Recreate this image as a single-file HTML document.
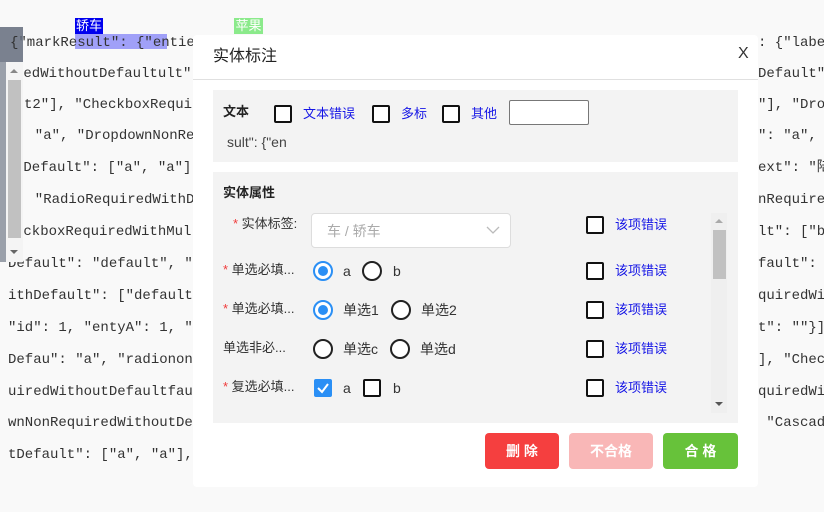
<!DOCTYPE html>
<html><head><meta charset="utf-8"><style>
*{margin:0;padding:0;box-sizing:border-box}
body{width:824px;height:512px;overflow:hidden;background:#f9f9f9;position:relative;font-family:"Liberation Sans","Noto Sans CJK SC",sans-serif}
.bg{position:absolute;font-family:"Liberation Mono",monospace;font-size:14px;color:#333;white-space:pre;line-height:16px}
.abs{position:absolute}
.cb{position:absolute;width:18px;height:18px;border:2px solid #111;border-radius:2px;background:#fff}
.rd{position:absolute;width:20px;height:20px;border:2px solid #222;border-radius:50%;background:#fff}
.rd.on{border-color:#2a8ff5}
.rd.on::after{content:"";position:absolute;left:3px;top:3px;width:10px;height:10px;border-radius:50%;background:#2a8ff5}
.t{position:absolute;font-size:14px;color:#333;white-space:nowrap;line-height:16px}
.lnk{position:absolute;font-size:13px;color:#1515e6;white-space:nowrap;line-height:16px}
.req{color:#f03a3a}
.btn{position:absolute;top:433px;height:36px;border-radius:4px;color:#fff;font-size:14px;font-weight:bold;text-align:center;line-height:36px}
</style></head><body>
<div class="abs" style="left:75px;top:18px;width:28px;height:16px;background:#0000ee;color:#fff;font-size:13px;line-height:16px;text-align:center">轿车</div>
<div class="abs" style="left:234px;top:18px;width:29px;height:16px;background:#8bea8b;color:#fff;font-size:13px;line-height:16px;text-align:center">苹果</div>
<div class="abs" style="left:75px;top:34px;width:92px;height:15px;background:#a0a0f8"></div>
<div class="bg" style="left:10px;top:35px">{"markResult": {"entie</div>
<div class="bg" style="left:15px;top:66px">redWithoutDefaultult"</div>
<div class="bg" style="left:24px;top:97px">t2"], "CheckboxRequi</div>
<div class="bg" style="left:18px;top:128px">  "a", "DropdownNonRe</div>
<div class="bg" style="left:15px;top:160px">.Default": ["a", "a"]</div>
<div class="bg" style="left:18px;top:192px">  "RadioRequiredWithD</div>
<div class="bg" style="left:15px;top:224px">eckboxRequiredWithMul</div>
<div class="bg" style="left:8px;top:256px">Default": "default", "</div>
<div class="bg" style="left:8px;top:288px">ithDefault": ["default</div>
<div class="bg" style="left:8px;top:320px">"id": 1, "entyA": 1, "</div>
<div class="bg" style="left:8px;top:352px">Defau": "a", "radionon</div>
<div class="bg" style="left:8px;top:384px">uiredWithoutDefaultfau</div>
<div class="bg" style="left:8px;top:415px">wnNonRequiredWithoutDe</div>
<div class="bg" style="left:8px;top:447px">tDefault": ["a", "a"],</div>
<div class="bg" style="left:758px;top:35px">: {"labe</div>
<div class="bg" style="left:758px;top:66px">Default"</div>
<div class="bg" style="left:758px;top:97px">"], "Drop</div>
<div class="bg" style="left:758px;top:128px">": "a",</div>
<div class="bg" style="left:758px;top:160px">ext": "陆</div>
<div class="bg" style="left:758px;top:192px">nRequired</div>
<div class="bg" style="left:758px;top:224px">lt": ["b</div>
<div class="bg" style="left:758px;top:256px">fault":</div>
<div class="bg" style="left:758px;top:288px">quiredWit</div>
<div class="bg" style="left:758px;top:320px">t": ""}]</div>
<div class="bg" style="left:758px;top:352px">], "Check</div>
<div class="bg" style="left:758px;top:384px">quiredWit</div>
<div class="bg" style="left:758px;top:415px"> "Cascad</div>
<div class="abs" style="left:0;top:27px;width:23px;height:35px;background:rgba(100,108,125,.85)"></div>
<div class="abs" style="left:0;top:62px;width:6px;height:200px;background:#9aa0aa"></div>
<div class="abs" style="left:6px;top:62px;width:17px;height:200px;background:#f4f4f4"></div>
<div class="abs" style="left:8px;top:80px;width:13px;height:158px;background:#c1c1c1"></div>
<div class="abs" style="left:10px;top:69px;width:0;height:0;border:4px solid transparent;border-bottom-color:#888;border-top:0"></div>
<div class="abs" style="left:10px;top:250px;width:0;height:0;border:4px solid transparent;border-top-color:#666;border-bottom:0"></div>
<div class="bg" style="left:10px;top:35px;color:#333">{</div>
<div class="abs" style="left:193px;top:35px;width:565px;height:452px;background:#fff;border-radius:4px"></div>
<div class="t" style="left:213px;top:48px;font-size:16px;line-height:18px;color:#222">实体标注</div>
<div class="t" style="left:738px;top:46px;font-size:16px;font-family:'Liberation Sans',sans-serif">X</div>
<div class="abs" style="left:193px;top:79px;width:565px;height:1px;background:#e0e0e0"></div>
<div class="abs" style="left:213px;top:90px;width:525px;height:72px;background:#f3f3f3"></div>
<div class="t" style="left:223px;top:104px;font-weight:bold;font-size:13px;color:#222">文本</div>
<div class="cb" style="left:274px;top:105px"></div><div class="lnk" style="left:303px;top:106px">文本错误</div>
<div class="cb" style="left:372px;top:105px"></div><div class="lnk" style="left:401px;top:106px">多标</div>
<div class="cb" style="left:442px;top:105px"></div><div class="lnk" style="left:471px;top:106px">其他</div>
<div class="abs" style="left:509px;top:100px;width:80px;height:25px;border:1px solid #777;border-radius:2px;background:#fff"></div>
<div class="t" style="left:227px;top:134px;color:#444">sult": {"en</div>
<div class="abs" style="left:213px;top:172px;width:525px;height:251px;background:#f3f3f3"></div>
<div class="t" style="left:223px;top:185px;font-weight:bold;font-size:13px;color:#222">实体属性</div>
<div class="t" style="left:233px;top:216px;font-size:13px"><span class="req">*</span> 实体标签:</div>
<div class="abs" style="left:311px;top:213px;width:200px;height:35px;border:1px solid #ddd;border-radius:4px;background:#fff"></div>
<div class="t" style="left:327px;top:223px;color:#aaa;font-size:14px">车 / 轿车</div>
<svg class="abs" style="left:486px;top:226px" width="14" height="9"><path d="M1 1L7 7L13 1" fill="none" stroke="#bbb" stroke-width="1.3"/></svg>
<div class="t" style="left:223px;top:262px;font-size:13px"><span class="req">*</span> 单选必填...</div>
<div class="rd on" style="left:313px;top:261px"></div><div class="t" style="left:343px;top:263px">a</div>
<div class="rd" style="left:362px;top:261px"></div><div class="t" style="left:393px;top:263px">b</div>
<div class="t" style="left:223px;top:301px;font-size:13px"><span class="req">*</span> 单选必填...</div>
<div class="rd on" style="left:313px;top:300px"></div><div class="t" style="left:343px;top:302px">单选1</div>
<div class="rd" style="left:391px;top:300px"></div><div class="t" style="left:421px;top:302px">单选2</div>
<div class="t" style="left:223px;top:340px;font-size:13px">单选非必...</div>
<div class="rd" style="left:313px;top:339px"></div><div class="t" style="left:343px;top:341px">单选c</div>
<div class="rd" style="left:390px;top:339px"></div><div class="t" style="left:420px;top:341px">单选d</div>
<div class="t" style="left:223px;top:379px;font-size:13px"><span class="req">*</span> 复选必填...</div>
<div class="abs" style="left:314px;top:379px;width:18px;height:18px;background:#2a8ff5;border-radius:2px"></div>
<svg class="abs" style="left:314px;top:379px" width="18" height="18"><path d="M4 9L8 13L14 5" fill="none" stroke="#fff" stroke-width="2"/></svg>
<div class="t" style="left:343px;top:380px">a</div>
<div class="cb" style="left:363px;top:379px"></div><div class="t" style="left:393px;top:380px">b</div>
<div class="cb" style="left:586px;top:216px"></div><div class="lnk" style="left:615px;top:217px">该项错误</div>
<div class="cb" style="left:586px;top:262px"></div><div class="lnk" style="left:615px;top:263px">该项错误</div>
<div class="cb" style="left:586px;top:301px"></div><div class="lnk" style="left:615px;top:302px">该项错误</div>
<div class="cb" style="left:586px;top:340px"></div><div class="lnk" style="left:615px;top:341px">该项错误</div>
<div class="cb" style="left:586px;top:379px"></div><div class="lnk" style="left:615px;top:380px">该项错误</div>
<div class="abs" style="left:711px;top:213px;width:16px;height:200px;background:#efefef"></div>
<div class="abs" style="left:713px;top:230px;width:13px;height:49px;background:#c1c1c1"></div>
<div class="abs" style="left:715px;top:219px;border:4px solid transparent;border-bottom-color:#aaa;border-top:0"></div>
<div class="abs" style="left:715px;top:402px;border:4px solid transparent;border-top-color:#555;border-bottom:0"></div>
<div class="btn" style="left:485px;width:74px;background:#f53f3f">删 除</div>
<div class="btn" style="left:569px;width:84px;background:#f9b7b7">不合格</div>
<div class="btn" style="left:663px;width:75px;background:#67c23a">合 格</div>
</body></html>
